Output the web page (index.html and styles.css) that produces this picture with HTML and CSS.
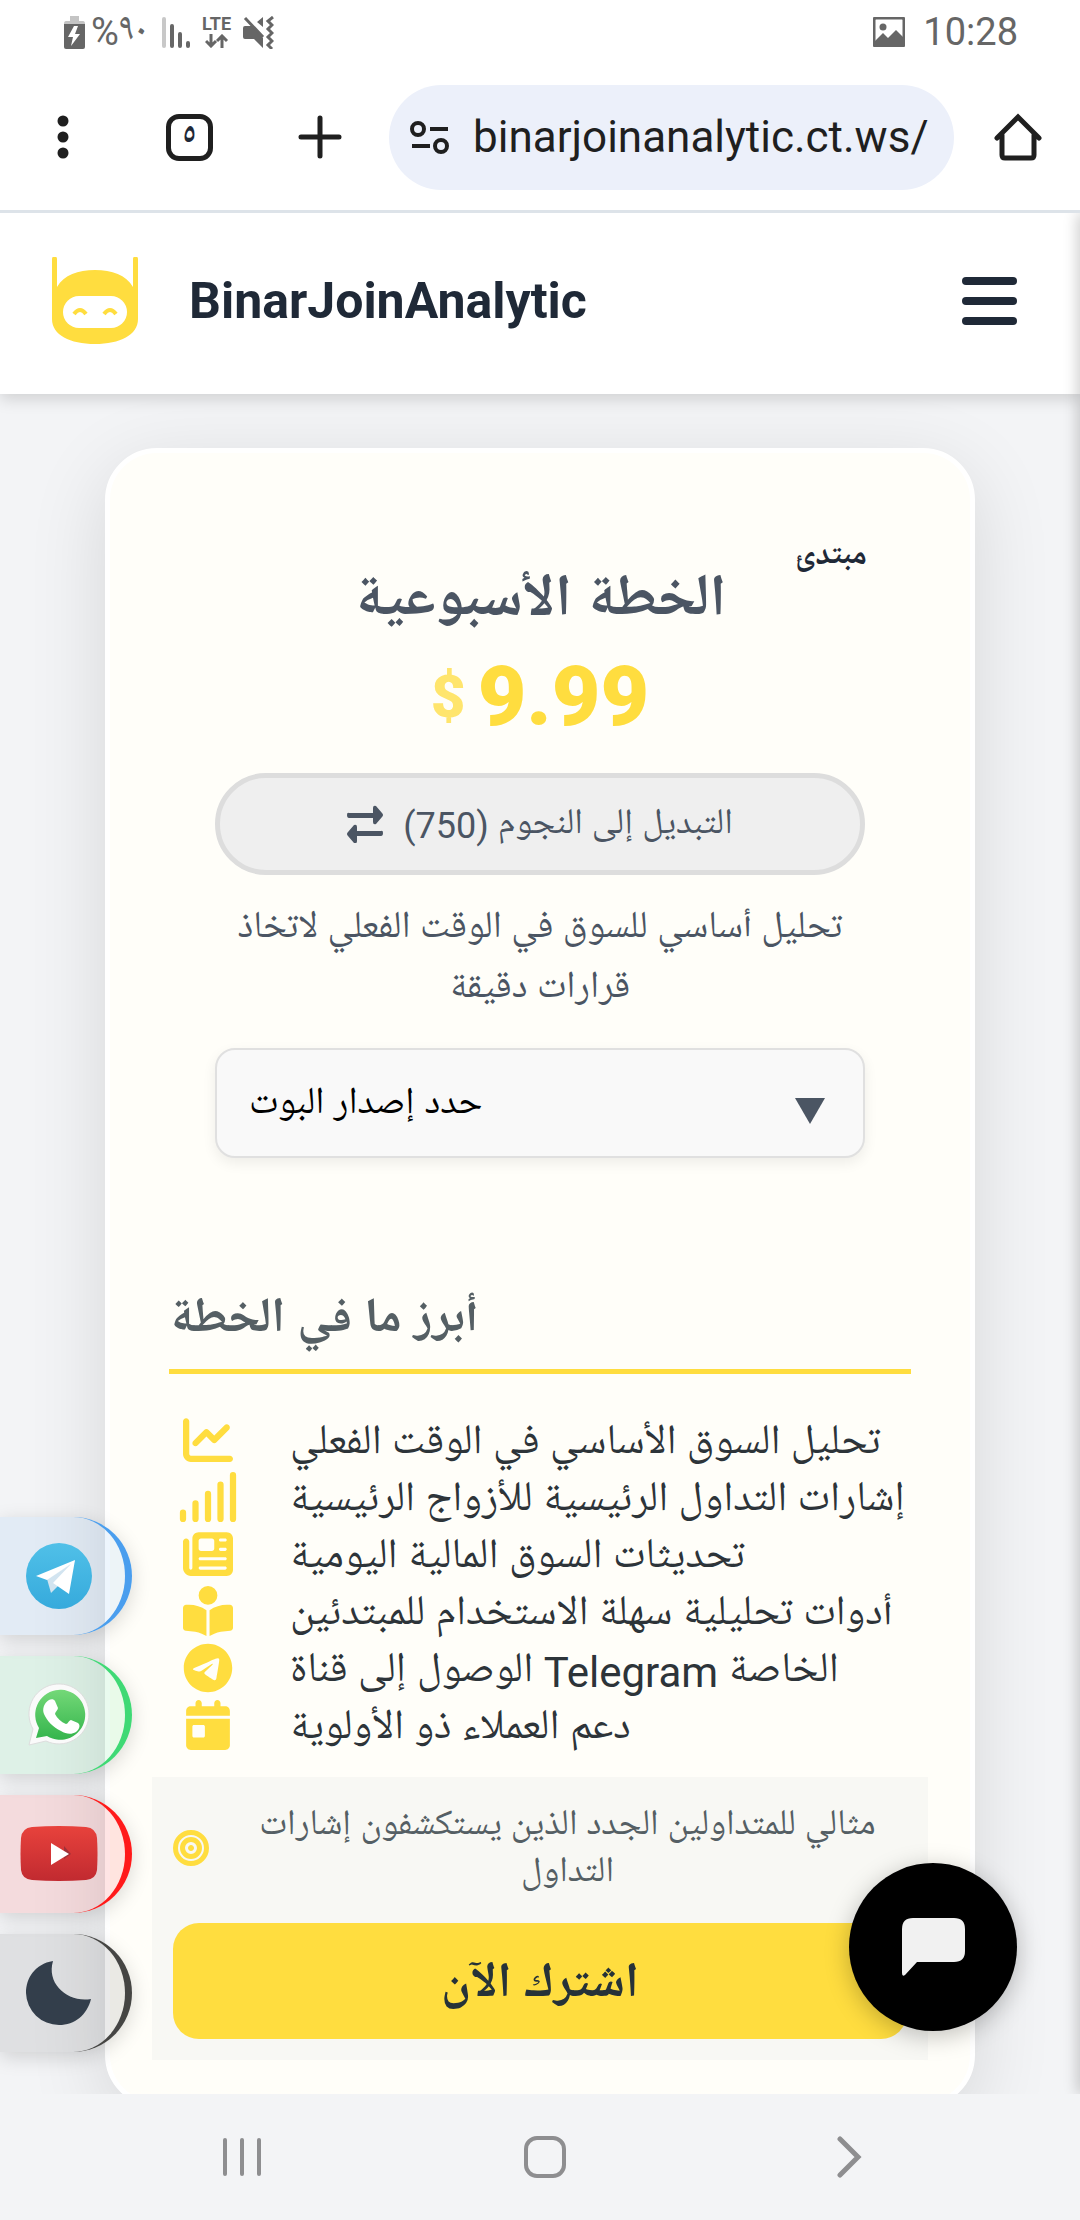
FILE: index.html
```html
<!DOCTYPE html>
<html lang="ar" dir="ltr">
<head>
<meta charset="utf-8">
<meta name="viewport" content="width=device-width, initial-scale=1">
<title>BinarJoinAnalytic</title>
<link rel="stylesheet" href="styles.css">
</head>
<body>
<div class="status">
  <div class="status-group">
    <svg width="21" height="33" viewBox="0 0 21 33"><path fill="#c4c4c4" d="M6 0h9v5h4q2 0 2 3H0q0-3 2-3h4z"/><path fill="#666" d="M0 8h21v23q0 2-2 2H2q-2 0-2-2z"/><path fill="#fff" d="M10 10 4 21h5l-2 9 9-12h-5l3-8z"/></svg>
    <span class="battery-text" dir="ltr">%٩٠</span>
    <svg class="signal" width="28" height="31" viewBox="0 0 28 31" stroke-width="4" stroke-linecap="round"><path stroke="#c8c8c8" d="M2 2v27"/><path stroke="#666" d="M10 9v20M18 17v12M26 26v3"/></svg>
    <span class="lte"><span>LTE</span>
      <svg width="24" height="14" viewBox="0 0 24 14" fill="none" stroke="#666" stroke-width="3"><path d="M6 0v11M1 7l5 5 5-5M17 14V3M12 7l5-5 5 5"/></svg>
    </span>
    <svg width="31" height="33" viewBox="0 0 31 33"><path fill="#666" d="M2 10h7l11 12v10l-9-9H2q-2 0-2-2v-9q0-2 2-2zM20 1v10l-6-5z"/><path fill="none" stroke="#666" stroke-width="3" d="M2 2l18 19M30 1l-5 4 4 4-4 4 4 4-4 4 4 4-4 4 4 4"/></svg>
  </div>
  <div class="status-group status-right">
    <svg width="32" height="30" viewBox="0 0 32 30"><rect x="1" y="1" width="30" height="28" rx="2" fill="none" stroke="#666" stroke-width="3"/><circle cx="10" cy="10" r="3.500" fill="#666"/><path fill="#666" d="M2 24l8-8 5 5 8-8 8 8v8H2z"/></svg>
    <span class="clock">10:28</span>
  </div>
</div>

<div class="toolbar">
  <button class="tool" aria-label="القائمة"><svg width="12" height="44" viewBox="0 0 12 44" fill="#1f1f1f"><circle cx="6" cy="6" r="5.500"/><circle cx="6" cy="22" r="5.500"/><circle cx="6" cy="38" r="5.500"/></svg></button>
  <button class="tool tabs" aria-label="علامات التبويب">٥</button>
  <button class="tool" aria-label="تبويب جديد"><svg width="44" height="44" viewBox="0 0 44 44" stroke="#1f1f1f" stroke-width="5" stroke-linecap="round"><path d="M22 3v38M3 22h38"/></svg></button>
  <div class="omnibox">
    <svg width="40" height="36" viewBox="0 0 40 36" fill="none" stroke="#1f1f1f" stroke-width="4"><circle cx="8" cy="10" r="6"/><path d="M20 10h18M2 27h18"/><circle cx="31" cy="27" r="6"/></svg>
    <input class="url" type="text" value="binarjoinanalytic.ct.ws/" aria-label="العنوان">
  </div>
  <button class="tool" aria-label="الصفحة الرئيسية"><svg width="48" height="48" viewBox="0 0 48 48" fill="none" stroke="#1f1f1f" stroke-width="5" stroke-linecap="round"><path d="M3 25 24 4l21 21M8 22v20q0 3 3 3h26q3 0 3-3V22"/></svg></button>
</div>

<div class="viewport">
  <header class="site-header">
    <svg width="86" height="88" viewBox="0 0 86 88"><path fill="#ffdd3f" d="M0 2a2.300 2.300 0 0 1 5 0V30C12 18 26 13 43 13S74 18 81 30V2a2.300 2.300 0 0 1 5 0V62C86 78 68 87 43 87S0 78 0 62z"/><rect x="11" y="39" width="64" height="32" rx="16" fill="#fff"/><path fill="none" stroke="#ffdd3f" stroke-width="4" d="M22 57q6-8 12 0M52 57q6-8 12 0"/></svg>
    <h1 class="brand">BinarJoinAnalytic</h1>
    <button class="burger" aria-label="فتح القائمة"><span></span><span></span><span></span></button>
  </header>

  <main class="page">
    <article class="card">
      <section class="plan">
        <span class="badge">مبتدئ</span>
        <h2 class="plan-title">الخطة الأسبوعية</h2>
        <p class="price"><span class="currency">$</span><span>9.99</span></p>
        <button class="switch">
          <svg width="36" height="38" viewBox="0 0 36 38" fill="#4b5563"><path d="M2 8h24V3q0-3 3-2l6 7q2 2 0 4l-6 7q-3 1-3-2v-4H2q-2 0-2-3t2-2zM34 26H10v-4q0-3-3-2l-6 7q-2 2 0 4l6 7q3 1 3-2v-5h24q2 0 2-3t-2-2z"/></svg>
          <span dir="rtl">التبديل إلى النجوم (750)</span>
        </button>
        <p class="summary" dir="rtl">تحليل أساسي للسوق في الوقت الفعلي لاتخاذ قرارات دقيقة</p>
        <div class="select-wrap">
          <select class="select" aria-label="حدد إصدار البوت"><option>حدد إصدار البوت</option></select>
        </div>
      </section>

      <section class="features">
        <h3 class="features-title">أبرز ما في الخطة</h3>
        <ul class="list">
          <li><svg viewBox="0 0 512 512"><path d="M64 64c0-17.700-14.300-32-32-32S0 46.300 0 64V400c0 44.200 35.800 80 80 80H480c17.700 0 32-14.300 32-32s-14.300-32-32-32H80c-8.800 0-16-7.200-16-16V64zm406.600 86.600c12.500-12.500 12.500-32.800 0-45.300s-32.800-12.500-45.300 0L320 210.700l-57.400-57.400c-12.500-12.500-32.800-12.500-45.300 0l-112 112c-12.500 12.500-12.500 32.800 0 45.300s32.800 12.500 45.300 0L240 221.300l57.400 57.400c12.500 12.500 32.800 12.500 45.300 0l128-128z"/></svg><span>تحليل السوق الأساسي في الوقت الفعلي</span></li>
          <li><svg viewBox="0 0 576 512"><path fill="none" stroke="#ffdd3f" stroke-width="64" stroke-linecap="round" d="M32 416v64M160 320v160M288 224v256M416 128v352M544 32v448"/></svg><span>إشارات التداول الرئيسية للأزواج الرئيسية</span></li>
          <li><svg viewBox="0 0 512 512"><path d="M96 96c0-35.300 28.700-64 64-64H448c35.300 0 64 28.700 64 64V416c0 35.300-28.700 64-64 64H80c-44.200 0-80-35.800-80-80V128c0-17.700 14.300-32 32-32s32 14.300 32 32V400c0 8.800 7.200 16 16 16s16-7.200 16-16V96zm64 24v80c0 13.300 10.700 24 24 24H296c13.300 0 24-10.700 24-24V120c0-13.300-10.700-24-24-24H184c-13.300 0-24 10.700-24 24zm208-8c0 8.800 7.200 16 16 16h48c8.800 0 16-7.200 16-16s-7.200-16-16-16H384c-8.800 0-16 7.200-16 16zm0 96c0 8.800 7.200 16 16 16h48c8.800 0 16-7.200 16-16s-7.200-16-16-16H384c-8.800 0-16 7.200-16 16zM160 304c0 8.800 7.200 16 16 16H432c8.800 0 16-7.200 16-16s-7.200-16-16-16H176c-8.800 0-16 7.200-16 16zm0 96c0 8.800 7.200 16 16 16H432c8.800 0 16-7.200 16-16s-7.200-16-16-16H176c-8.800 0-16 7.200-16 16z"/></svg><span>تحديثات السوق المالية اليومية</span></li>
          <li><svg viewBox="0 0 512 512"><path d="M160 96a96 96 0 1 1 192 0A96 96 0 1 1 160 96zm80 152V512l-48.400-24.200c-20.900-10.400-43.500-17-66.800-19.300l-96-9.600C12.500 457.200 0 443.500 0 427V224c0-17.700 14.300-32 32-32H62.300c63.600 0 125.600 19.600 177.700 56zm32 264V248c52.100-36.400 114.100-56 177.700-56H480c17.700 0 32 14.300 32 32V427c0 16.400-12.500 30.200-28.800 31.800l-96 9.600c-23.200 2.300-45.900 8.900-66.800 19.300L272 512z"/></svg><span>أدوات تحليلية سهلة الاستخدام للمبتدئين</span></li>
          <li><svg viewBox="-8 0 512 512"><path fill-rule="evenodd" d="M248 8C111 8 0 119 0 256S111 504 248 504 496 393 496 256 385 8 248 8zM363 176.700c-3.700 39.200-19.900 134.400-28.100 178.300-3.500 18.600-10.300 24.800-16.900 25.400-14.400 1.300-25.300-9.500-39.300-18.700-21.800-14.300-34.200-23.200-55.300-37.200-24.500-16.100-8.600-25 5.300-39.500 3.700-3.800 67.100-61.500 68.300-66.700 .2-.7 .3-3.100-1.200-4.400s-3.600-.8-5.100-.5q-3.300 .7-104.600 69.100-14.800 10.200-26.900 9.900c-8.900-.2-25.900-5-38.600-9.100-15.500-5-27.900-7.700-26.800-16.300q.8-6.700 18.500-13.700 108.400-47.200 144.600-62.300c68.900-28.600 83.200-33.600 92.500-33.800 2.100 0 6.600 .5 9.600 2.900a10.500 10.500 0 0 1 3.500 6.700A43.800 43.800 0 0 1 363 176.700z"/></svg><span>الوصول إلى قناة Telegram الخاصة</span></li>
          <li><svg viewBox="-32 0 512 512"><path d="M128 0c17.700 0 32 14.300 32 32V64H288V32c0-17.700 14.300-32 32-32s32 14.300 32 32V64h48c26.500 0 48 21.500 48 48v48H0V112C0 85.500 21.500 64 48 64H96V32c0-17.700 14.300-32 32-32zM0 192H448V464c0 26.500-21.500 48-48 48H48c-26.500 0-48-21.500-48-48V192zm80 64c-8.800 0-16 7.200-16 16v96c0 8.800 7.200 16 16 16h96c8.800 0 16-7.200 16-16V272c0-8.800-7.200-16-16-16H80z"/></svg><span>دعم العملاء ذو الأولوية</span></li>
        </ul>
      </section>

      <footer class="card-foot">
        <p class="ideal">
          <svg width="36" height="36" viewBox="0 0 36 36" fill="none" stroke="#ffdd3f"><circle cx="18" cy="18" r="15.500" stroke-width="5"/><circle cx="18" cy="18" r="8.500" stroke-width="5"/><circle cx="18" cy="18" r="2.500" fill="#ffdd3f"/></svg>
          <span dir="rtl">مثالي للمتداولين الجدد الذين يستكشفون إشارات التداول</span>
        </p>
        <button class="subscribe">اشترك الآن</button>
      </footer>
    </article>
  </main>

  <nav class="side">
    <a class="side-link telegram" href="#telegram" aria-label="Telegram"><svg width="66" height="66" viewBox="0 0 66 66"><defs><linearGradient id="tg" x2="0" y2="1"><stop stop-color="#50c0e8"/><stop offset="1" stop-color="#36aadc"/></linearGradient></defs><circle cx="33" cy="33" r="33" fill="url(#tg)"/><path fill="#d2e4f0" d="M21 36l4 14 8-8 16-24z"/><path fill="#fff" d="M10 33 49 17 43 51 27 40 45 21 21 37z"/></svg></a>
    <a class="side-link whatsapp" href="#whatsapp" aria-label="WhatsApp"><svg width="66" height="66" viewBox="0 0 66 66"><defs><linearGradient id="wa" x2="0" y2="1"><stop stop-color="#74d878"/><stop offset="1" stop-color="#34b54c"/></linearGradient></defs><path fill="#fafafa" stroke="#ddd" d="M3 63 7 47A30 30 0 1 1 20 59z"/><path fill="url(#wa)" d="M10 56l3-10A25 25 0 1 1 21 54z"/><path fill="#fff" d="M23 18c2-1 5-1 6 1l3 7c0 2-3 4-3 6 2 4 6 8 11 10 2 0 3-4 5-4l7 3c3 2 1 7-2 9-5 3-10 2-15-1-8-4-14-10-17-17-2-5 0-11 5-14z"/></svg></a>
    <a class="side-link youtube" href="#youtube" aria-label="YouTube"><svg width="78" height="56" viewBox="0 0 78 56"><defs><linearGradient id="yt" x2="0" y2="1"><stop stop-color="#e8423c"/><stop offset="1" stop-color="#c12a30"/></linearGradient></defs><path fill="url(#yt)" d="M12 1Q39-1 66 1 76 2 77 12q1 16 0 32-1 9-11 10-27 2-54 0Q2 53 1 44 0 28 1 12 2 2 12 1z"/><path fill="#a03038" d="M44 20l7 8-7 5z"/><path fill="#fff" d="M31 17l18 11-18 11z"/></svg></a>
    <a class="side-link theme" href="#theme" aria-label="الوضع الليلي"><svg width="66" height="66" viewBox="0 0 66 66"><path fill="#333e4b" d="M27 1C9 4 0 18 0 33a33 33 0 0 0 33 32c16 0 28-10 32-26C42 43 20 24 27 1z"/></svg></a>
  </nav>
  <button class="chat" aria-label="محادثة"><svg width="63" height="58" viewBox="0 0 63 58" fill="#f1f1f1"><path d="M11 0h41q11 0 11 11v22q0 11-11 11H15L3 57q-3 2-3-2V11Q0 0 11 0z"/></svg></button>
</div>

<nav class="system-nav">
  <button class="tool" aria-label="التطبيقات الأخيرة"><svg width="40" height="40" viewBox="0 0 40 40" stroke="#8e8e90" stroke-width="4" stroke-linecap="round"><path d="M3 3v34M20 3v34M37 3v34"/></svg></button>
  <button class="tool" aria-label="الشاشة الرئيسية"><svg width="42" height="42" viewBox="0 0 42 42" fill="none" stroke="#8e8e90" stroke-width="4"><rect x="2" y="2" width="38" height="38" rx="11"/></svg></button>
  <button class="tool" aria-label="رجوع"><svg width="42" height="42" viewBox="0 0 42 42" fill="none" stroke="#8e8e90" stroke-width="5" stroke-linecap="round"><path d="M12 3l18 18-18 18"/></svg></button>
</nav>
</body>
</html>
```
FILE: styles.css
```css
* { box-sizing: border-box; }
html, body { margin: 0; }
body {
  display: flex;
  flex-direction: column;
  height: 100vh;
  background: #fff;
  color: #1f2937;
  font-family: Roboto, "Noto Naskh Arabic UI", "Noto Naskh Arabic", "Noto Sans Arabic", "DejaVu Sans", sans-serif;
}
h1, h2, h3, p, ul { margin: 0; padding: 0; }
button, input, select { font: inherit; color: inherit; }
button { padding: 0; border: 0; background: none; }
svg { display: block; flex: none; }

.status {
  display: flex;
  justify-content: space-between;
  height: 64px;
  padding: 0 62px 0 64px;
  color: #666;
}
.status-group { display: flex; align-items: center; }
.battery-text { margin-left: 6px; width: 54px; font-size: 38px; line-height: 40px; white-space: nowrap; }
.signal { margin: 0 12px 0 17px; }
.lte { display: flex; flex-direction: column; align-items: center; gap: 2px; margin-right: 12px; font-size: 18px; font-weight: 700; line-height: 16px; }
.status-right { gap: 18px; }
.clock { font-size: 38px; line-height: 40px; }

.toolbar {
  display: flex;
  align-items: center;
  height: 149px;
  padding: 0 38px 0 57px;
  border-bottom: 3px solid #dde3e9;
}
.tool { display: flex; flex: none; align-items: center; justify-content: center; }
.tabs {
  width: 47px;
  height: 47px;
  margin: 0 85px 0 97px;
  border: 5px solid #1f1f1f;
  border-radius: 13px;
  font-size: 32px;
  font-weight: 700;
  line-height: 32px;
}
.omnibox {
  display: flex;
  flex: 1;
  align-items: center;
  gap: 23px;
  min-width: 0;
  height: 105px;
  margin: 0 40px 0 47px;
  padding: 0 16px 0 21px;
  border-radius: 53px;
  background: #ecf0fa;
}
.url { flex: 1; min-width: 0; padding: 0; border: 0; outline: 0; background: none; color: #1f1f1f; font-size: 44px; }

.viewport {
  position: relative;
  flex: 1;
  min-height: 0;
  overflow: hidden;
  background: #f3f4f6;
}
.viewport::after {
  content: "";
  position: absolute;
  inset: 0 -10px 0 auto;
  width: 10px;
  box-shadow: 0 0 16px rgba(0, 0, 0, .3);
  z-index: 4;
}
.site-header {
  position: relative;
  z-index: 1;
  display: flex;
  align-items: center;
  height: 181px;
  padding: 0 63px 6px 52px;
  background: #fff;
  box-shadow: 0 5px 15px rgba(0, 0, 0, .15);
}
.brand { flex: 1; margin-left: 51px; font-size: 50px; line-height: 60px; }
.burger { display: flex; flex-direction: column; gap: 12px; width: 55px; }
.burger span { height: 8px; border-radius: 4px; background: #1f2937; }

.page { padding: 54px 105px; }
.card {
  padding: 80px 42px 42px;
  border: 5px solid #fff;
  border-radius: 52px;
  background: #fffef9;
  box-shadow: 0 20px 80px rgba(0, 0, 0, .12);
}
.plan {
  position: relative;
  display: flex;
  flex-direction: column;
  padding: 0 63px;
  text-align: center;
}
.badge { position: absolute; top: 0; right: 61px; font-size: 32px; font-weight: 700; line-height: 48px; }
.plan-title { margin-top: 28px; color: #4b5563; font-size: 59px; font-weight: 700; line-height: 84px; }
.price {
  display: flex;
  align-items: center;
  justify-content: center;
  gap: 12px;
  margin-top: 2px;
  color: #ffdd3f;
  font-size: 84px;
  font-weight: 900;
  line-height: 100px;
}
.currency { font-size: 60px; opacity: .75; }
.switch {
  display: flex;
  align-items: center;
  justify-content: center;
  gap: 20px;
  height: 102px;
  margin-top: 26px;
  border: 5px solid #ddd;
  border-radius: 51px;
  background: #efefef;
  color: #4b5563;
  font-size: 36px;
}
.summary { margin-top: 24px; color: #4b5563; font-size: 38px; line-height: 60px; }
.select-wrap { display: grid; align-items: center; margin-top: 29px; }
.select-wrap::after {
  content: "";
  grid-area: 1 / 1;
  justify-self: end;
  width: 30px;
  height: 26px;
  margin: 16px 40px 0 0;
  background: #4b5563;
  clip-path: polygon(0 0, 100% 0, 50% 100%);
  pointer-events: none;
}
.select {
  grid-area: 1 / 1;
  width: 100%;
  height: 110px;
  padding: 4px 32px 0;
  border: 2px solid #e0e0e0;
  border-radius: 20px;
  appearance: none;
  background: #f9f9f9;
  box-shadow: 0 5px 14px rgba(0, 0, 0, .07);
  color: #000;
  font-size: 38px;
}

.features { margin-top: 126px; padding: 0 17px; }
.features-title {
  padding: 0 0 9px;
  border-bottom: 5px solid #ffdd3f;
  color: #555f64;
  font-size: 49px;
  font-weight: 700;
  line-height: 76px;
}
.list { margin-top: 37px; list-style: none; color: #2d3439; font-size: 42px; }
.list li { display: flex; align-items: center; gap: 53px; height: 57px; padding-left: 10px; white-space: nowrap; }
.list svg { width: 58px; height: 50px; fill: #ffdd3f; }
.list span { padding-top: 6px; }

.card-foot { margin-top: 24px; padding: 21px; background: #f8f8f4; }
.ideal {
  display: flex;
  align-items: center;
  gap: 36px;
  padding-right: 17px;
  color: #555f64;
  font-size: 36px;
  line-height: 47px;
  text-align: center;
}
.ideal span { flex: 1; padding-top: 6px; }
.subscribe {
  width: 100%;
  height: 116px;
  margin-top: 25px;
  padding-top: 6px;
  border-radius: 26px;
  background: #ffdd3f;
  color: #263238;
  font-size: 49px;
  font-weight: 700;
}

.side {
  position: absolute;
  left: 0;
  bottom: 42px;
  z-index: 2;
  display: flex;
  flex-direction: column;
  gap: 21px;
}
.side-link {
  display: flex;
  align-items: center;
  justify-content: center;
  width: 132px;
  height: 118px;
  padding-right: 8px;
  border-right: 7px solid;
  border-radius: 0 59px 59px 0;
  box-shadow: 0 5px 20px rgba(0, 0, 0, .15);
}
.telegram { border-color: #4a9eee; background: rgba(74, 158, 238, .1); }
.whatsapp { border-color: #3fd975; background: rgba(37, 211, 102, .1); }
.youtube { border-color: #ff1a1a; background: rgba(255, 0, 0, .1); }
.theme { border-color: #454543; background: rgba(51, 51, 51, .1); }
.chat {
  position: absolute;
  right: 63px;
  bottom: 63px;
  z-index: 3;
  display: flex;
  align-items: center;
  justify-content: center;
  width: 168px;
  height: 168px;
  border-radius: 50%;
  background: #000;
  box-shadow: 0 5px 25px rgba(0, 0, 0, .25);
}

.system-nav {
  display: flex;
  align-items: center;
  justify-content: space-between;
  height: 126px;
  padding: 0 210px 0 222px;
  background: #f3f4f6;
}
```
